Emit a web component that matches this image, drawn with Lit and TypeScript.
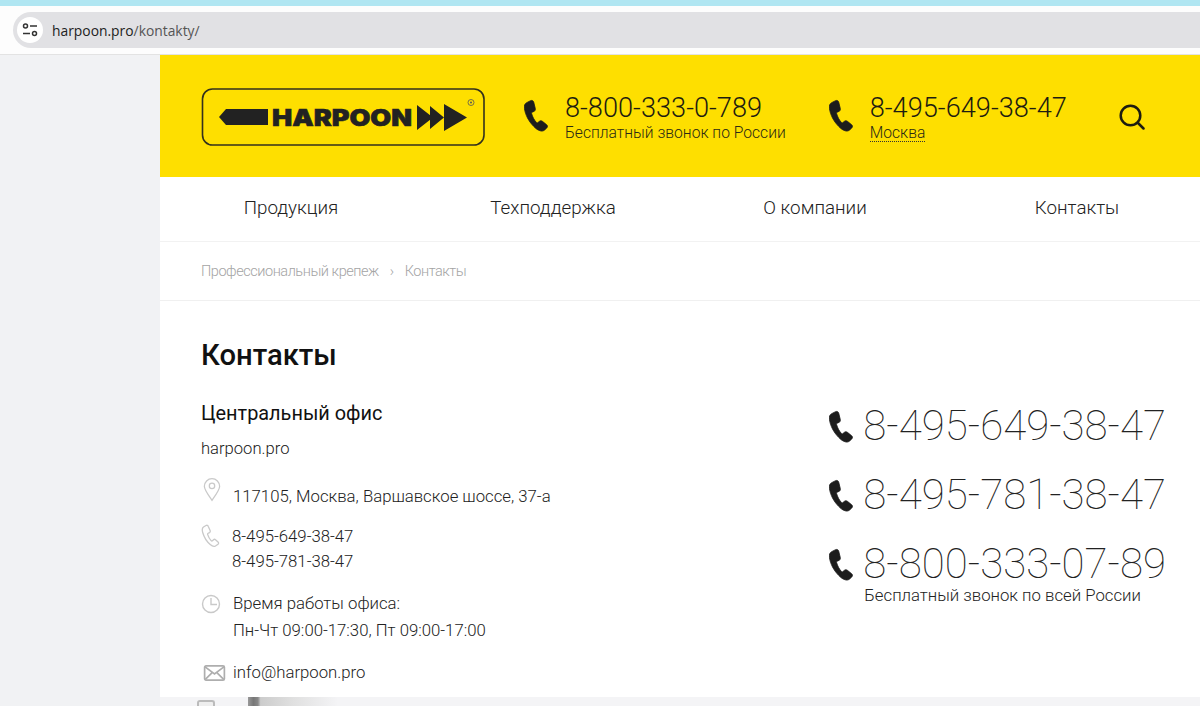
import { LitElement, html, css, svg } from "lit";
import { customElement } from "lit/decorators.js";

const phone = (w: number, h: number) => html`<svg class="ph" width=${w} height=${h} viewBox="0 0 24 32" fill="#1c1c1c" stroke="#1c1c1c" stroke-width=".8"><path d="M6.500 1.200 2.600 3.200C.6 4.400 0 6.400.4 9c1 6.600 4.300 12.700 9 17.600 2.200 2.300 4.500 4.400 7.600 4.900 1.500.2 2.700-.2 3.700-1.100l2.100-2c1-1 .9-2.200-.1-3.100l-4.300-3.500c-1-.8-2.100-.8-3 0l-1.500 1.300c-.5.4-1 .4-1.400 0-2.300-2.600-4-5.700-4.900-9.100-.2-.6 0-1 .5-1.300l1.900-.8c1.200-.6 1.600-1.600 1.300-2.800L9.700 2.600C9.300 1.200 7.900.5 6.500 1.200Z"/></svg>`;

const logo = svg`
  <rect x="1.500" y="1" width="281.500" height="56" rx="10" fill="#fedf00" stroke="#33311c" stroke-width="1.600"/>
  <path d="M18 29 25 21H67V37H25Z" fill="#222"/>
  <text x="71" y="38" class="lg" textLength="140" lengthAdjust="spacingAndGlyphs">HARPOON</text>
  <path d="M216 17 232 29.500 216 42ZM229 18 243 29.500 229 41ZM243 16 266 29.500 243 43Z" fill="#222"/>
  <circle cx="270" cy="14.500" r="3" fill="none" stroke="#555" stroke-width=".8"/>
  <circle cx="270" cy="14.500" r="1" fill="#555"/>
`;

@customElement("app-root")
export class AppRoot extends LitElement {
  static styles = css`
    :host { display: block; width: 1200px; height: 706px; overflow: hidden; background: #fff; font-family: Roboto, "Liberation Sans", sans-serif; color: #222; }
    .strip { height: 6px; background: #b0e6f2; }
    .chrome { height: 49px; box-sizing: border-box; padding: 6px 0 7px 13px; background: #fdfdfd; border-bottom: 1px solid #e3e3e3; }
    .pill { height: 36px; background: #e1e1e4; border-radius: 18px 0 0 18px; display: flex; align-items: center; padding-left: 4px; gap: 9px; font: 13.850px "Open Sans", Roboto, sans-serif; color: #555; }
    .pill b { font-weight: 400; color: #222; }
    .tune { width: 26px; height: 26px; border-radius: 50%; background: #fff; display: flex; align-items: center; justify-content: center; }
    .page { display: flex; height: 651px; background: #f1f2f4; }
    .side { width: 160px; flex: none; }
    .site { flex: 1; min-width: 0; background: #fff; display: flex; flex-direction: column; }
    .head { height: 122px; flex: none; background: #fedf00; display: flex; align-items: center; padding: 0 0 0 41px; color: #2b2a14; }
    .logo { display: block; margin-top: 3px; flex: none; }
    .lg { font: 900 23px Inter, "Liberation Sans", sans-serif; fill: #222; stroke: #222; stroke-width: .6px; }
    .hp { display: flex; align-items: center; gap: 17px; margin-top: 4px; flex: none; }
    .hp .ph { margin-bottom: 6px; }
    .hp1 { margin-left: 39px; }
    .hp2 { margin-left: 43px; }
    .hp .n { font-size: 27.200px; font-weight: 300; line-height: 30px; color: #1d1c10; }
    .hp .s { font-size: 15.650px; font-weight: 300; line-height: 20px; color: #2b2a14; }
    .dot { border-bottom: 1px dotted #333; display: inline-block; line-height: 17px; }
    .search { margin-left: 52px; display: block; margin-top: 2px; flex: none; }
    nav { height: 65px; flex: none; box-sizing: border-box; border-bottom: 1px solid #f2f2f2; display: grid; grid-template-columns: repeat(4, 262px); align-items: center; justify-items: center; padding-bottom: 3px; font-size: 18.800px; font-weight: 300; color: #222; }
    .crumbs { height: 59px; flex: none; box-sizing: border-box; border-bottom: 1px solid #f0f0f0; display: flex; align-items: center; padding-left: 41px; font-size: 14.500px; font-weight: 300; color: #a4a4a4; letter-spacing: -.45px; }
    .crumbs i { font-style: normal; margin: 0 11px; }
    main { flex: 1; display: flex; justify-content: space-between; padding: 0 34px 0 41px; }
    h1 { margin: 35px 0 0; font-size: 29.200px; font-weight: 500; line-height: 38px; color: #111; }
    h2 { margin: 27px 0 0; font-size: 19.900px; font-weight: 400; line-height: 26px; color: #111; }
    .web { margin-top: 10px; font-size: 16.600px; font-weight: 300; line-height: 24px; }
    .row { display: flex; font-size: 16.750px; font-weight: 300; line-height: 26px; }
    .ic { width: 32px; flex: none; }
    .r1 { margin-top: 17px; }
    .r1 .ic { padding-left: 2px; width: 30px; margin-top: -1px; }
    .r2 { margin-top: 15px; line-height: 25px; }
    .r2 .t { margin-left: -1px; }
    .r3 { margin-top: 16px; }
    .r4 { margin-top: 15px; }
    .r4 .ic { padding: 3px 0 0 2px; width: 30px; }
    .r1 .t { padding-top: 5px; }
    .r3 .t { line-height: 27px; }
    .right { padding-top: 101px; }
    .bp { display: flex; align-items: center; gap: 10px; height: 48px; margin-bottom: 21px; }
    .bp .n { font-size: 42px; font-weight: 100; line-height: 40px; color: #222; }
    .note { font-size: 16.750px; font-weight: 300; line-height: 20px; margin: -24px 0 0 35px; }
    .foot { height: 9px; flex: none; background: #f4f4f6; display: flex; padding-left: 37px; }
    .foot .a { width: 18px; height: 6px; margin-top: 3px; box-sizing: border-box; background: #eee; border: 2px solid #bbb; border-bottom: 0; border-radius: 3px 3px 0 0; }
    .foot .b { width: 90px; height: 9px; margin-left: 33px; background: linear-gradient(90deg, #999, #777 6%, #888 11%, #ccc 14%, #e0e0e0 50%, #f4f4f6); }
  `;

  render() {
    return html`
      <div class="strip"></div>
      <div class="chrome">
        <div class="pill">
          <span class="tune"><svg width="16" height="14" viewBox="0 0 16 14" fill="none" stroke="#333" stroke-width="1.500"><circle cx="3.500" cy="3" r="2"/><path d="M8 3h7M1 10.500h7"/><circle cx="12.500" cy="10.500" r="2"/></svg></span>
          <span><b>harpoon.pro</b>/kontakty/</span>
        </div>
      </div>
      <div class="page">
        <div class="side"></div>
        <div class="site">
          <header class="head">
            <svg class="logo" width="284" height="59" viewBox="0 0 284 59">${logo}</svg>
            <div class="hp hp1">${phone(24, 33)}<div><div class="n">8-800-333-0-789</div><div class="s">Бесплатный звонок по России</div></div></div>
            <div class="hp hp2">${phone(24, 33)}<div><div class="n">8-495-649-38-47</div><div class="s"><span class="dot">Москва</span></div></div></div>
            <svg class="search" width="26" height="26" viewBox="0 0 26 26" fill="none" stroke="#1d1c10" stroke-width="2.500"><circle cx="11.500" cy="11.500" r="9.800"/><path d="M19 19l5.500 5.500" stroke-linecap="round"/></svg>
          </header>
          <nav><span>Продукция</span><span>Техподдержка</span><span>О компании</span><span>Контакты</span></nav>
          <div class="crumbs"><span>Профессиональный крепеж</span><i>›</i><span>Контакты</span></div>
          <main>
            <div>
              <h1>Контакты</h1>
              <h2>Центральный офис</h2>
              <div class="web">harpoon.pro</div>
              <div class="row r1"><span class="ic"><svg width="18" height="25" viewBox="0 0 20 26" fill="none" stroke="#c9c9c9" stroke-width="1.400"><path d="M10 25C5 18 1.500 13.500 1.500 9.500a8.500 8.500 0 0 1 17 0C18.500 13.500 15 18 10 25Z"/><circle cx="10" cy="9" r="3"/></svg></span><span class="t">117105, Москва, Варшавское шоссе, 37-а</span></div>
              <div class="row r2"><span class="ic"><svg width="20" height="24" viewBox="0 0 20 24" fill="none" stroke="#c9c9c9" stroke-width="1.300"><path d="M5 1.500 2.500 3C1 4 1 6 1.700 8.500c1.300 4.500 4 9 7.500 12 2 1.800 4 2.300 5.300 1.500l2.500-1.800c.8-.7.700-1.500 0-2.200l-2.500-2.300c-.7-.6-1.400-.6-2 0l-1 1c-.5.400-1 .300-1.400-.100-1.500-1.700-2.700-3.800-3.400-6-.2-.6 0-1 .5-1.300l1.300-.7c.7-.4.900-1.100.7-1.900L7.200 2.300C6.900 1.300 6 1 5 1.500Z"/></svg></span><span class="t">8-495-649-38-47<br />8-495-781-38-47</span></div>
              <div class="row r3"><span class="ic"><svg width="20" height="24" viewBox="0 0 20 24" fill="none" stroke="#c9c9c9" stroke-width="1.400"><circle cx="10" cy="14" r="8.500"/><path d="M10 8v6.500h6"/></svg></span><span class="t">Время работы офиса:<br />Пн-Чт 09:00-17:30, Пт 09:00-17:00</span></div>
              <div class="row r4"><span class="ic"><svg width="23" height="16" viewBox="0 0 23 17" fill="none" stroke="#aeaeae" stroke-width="1.800"><rect x="1" y="1" width="21" height="15" rx="1.500"/><path d="m1.500 2 10 7.500 10-7.500M1.500 15.500l7.500-7.500M21.500 15.500l-7.500-7.500"/></svg></span><span>info@harpoon.pro</span></div>
            </div>
            <div class="right">
              <div class="bp">${phone(24, 33)}<span class="n">8-495-649-38-47</span></div>
              <div class="bp">${phone(24, 33)}<span class="n">8-495-781-38-47</span></div>
              <div class="bp">${phone(24, 33)}<span class="n">8-800-333-07-89</span></div>
              <div class="note">Бесплатный звонок по всей России</div>
            </div>
          </main>
          <div class="foot"><span class="a"></span><span class="b"></span></div>
        </div>
      </div>
    `;
  }
}
